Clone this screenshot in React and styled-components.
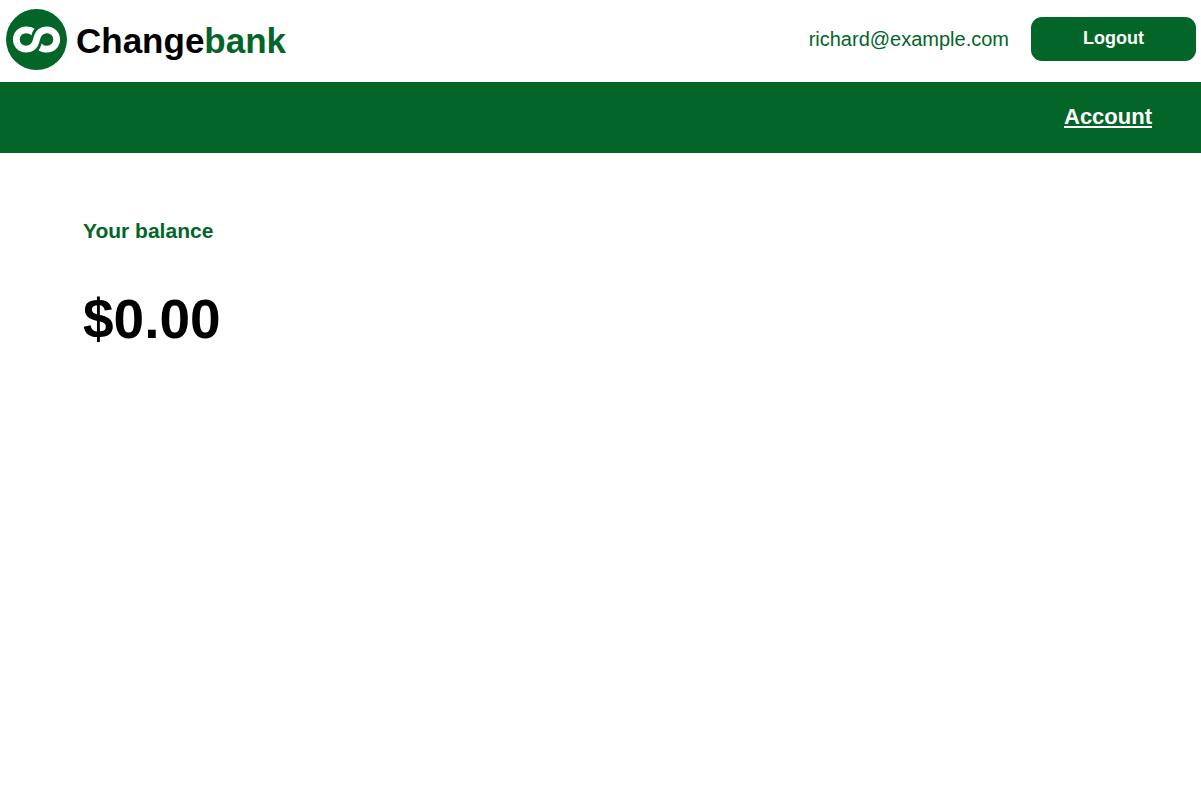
import React from "react";
import styled, { createGlobalStyle } from "styled-components";

const green = "#036528";

const GlobalStyle = createGlobalStyle`
  * { box-sizing: border-box; }
  body {
    margin: 0;
    background: #fff;
    color: #000;
    font-family: "Liberation Sans", Arial, sans-serif;
  }
`;

const Header = styled.header`
  display: flex;
  align-items: center;
  justify-content: space-between;
  height: 82px;
  padding: 0 5px 4px 6px;
`;

const Brand = styled.a`
  display: flex;
  align-items: center;
  gap: 9px;
  color: #000;
  font-size: 35px;
  font-weight: 700;
  line-height: 40px;
  text-decoration: none;
`;

const LogoMark = styled.svg`
  display: block;
  width: 61px;
  height: 61px;
`;

const BrandName = styled.span`
  padding-top: 4px;
`;

const BrandAccent = styled.span`
  color: ${green};
`;

const Session = styled.div`
  display: flex;
  align-items: center;
  gap: 22px;
`;

const Email = styled.p`
  margin: 0;
  color: ${green};
  font-size: 20px;
  line-height: 24px;
`;

const LogoutButton = styled.button`
  width: 165px;
  height: 44px;
  padding: 0 0 2px;
  border: 0;
  border-radius: 11px;
  background: ${green};
  color: #fff;
  font-family: inherit;
  font-size: 18px;
  font-weight: 700;
  line-height: 20px;
  cursor: pointer;
`;

const NavBar = styled.nav`
  display: flex;
  align-items: center;
  justify-content: flex-end;
  height: 71px;
  padding: 0 49px 2px;
  background: ${green};
`;

const NavLink = styled.a`
  color: #fff;
  font-size: 22px;
  font-weight: 700;
  line-height: 24px;
`;

const Main = styled.main`
  padding: 66px 83px;
`;

const SectionTitle = styled.h1`
  margin: 0 0 44px;
  color: ${green};
  font-size: 21px;
  line-height: 24px;
`;

const Balance = styled.p`
  margin: 0;
  font-size: 55px;
  font-weight: 700;
  line-height: 64px;
`;

function Logo() {
  return (
    <LogoMark viewBox="0 0 61 61" aria-hidden="true">
      <circle cx="30.5" cy="30.5" r="30.5" fill={green} />
      <g fill="none" stroke="#fff" strokeWidth="6.8">
        <path d="M20.6 20.9H19.9A9.6 9.6 0 0 0 19.9 40.1C26.8 40.1 29.3 36 30.5 30.5C31.7 25 34.2 20.9 41.1 20.9A9.6 9.6 0 0 1 41.1 40.1H40.4" />
      </g>
      <g fill="#fff">
        <path d="M20 17.5C23.4 17.5 26.3 18.4 28.6 19.8C27 21.6 26.1 23.6 25.4 26.6C24 25 22.4 24.3 20 24.3Z" />
        <path d="M41 43.5C37.6 43.5 34.7 42.6 32.4 41.2C34 39.4 34.9 37.4 35.6 34.4C37 36 38.6 36.7 41 36.7Z" />
      </g>
    </LogoMark>
  );
}

export default function App() {
  return (
    <>
      <GlobalStyle />
      <Header>
        <Brand href="#">
          <Logo />
          <BrandName>
            Change<BrandAccent>bank</BrandAccent>
          </BrandName>
        </Brand>
        <Session>
          <Email>richard@example.com</Email>
          <LogoutButton type="button">Logout</LogoutButton>
        </Session>
      </Header>
      <NavBar>
        <NavLink href="#account">Account</NavLink>
      </NavBar>
      <Main>
        <SectionTitle>Your balance</SectionTitle>
        <Balance>$0.00</Balance>
      </Main>
    </>
  );
}
